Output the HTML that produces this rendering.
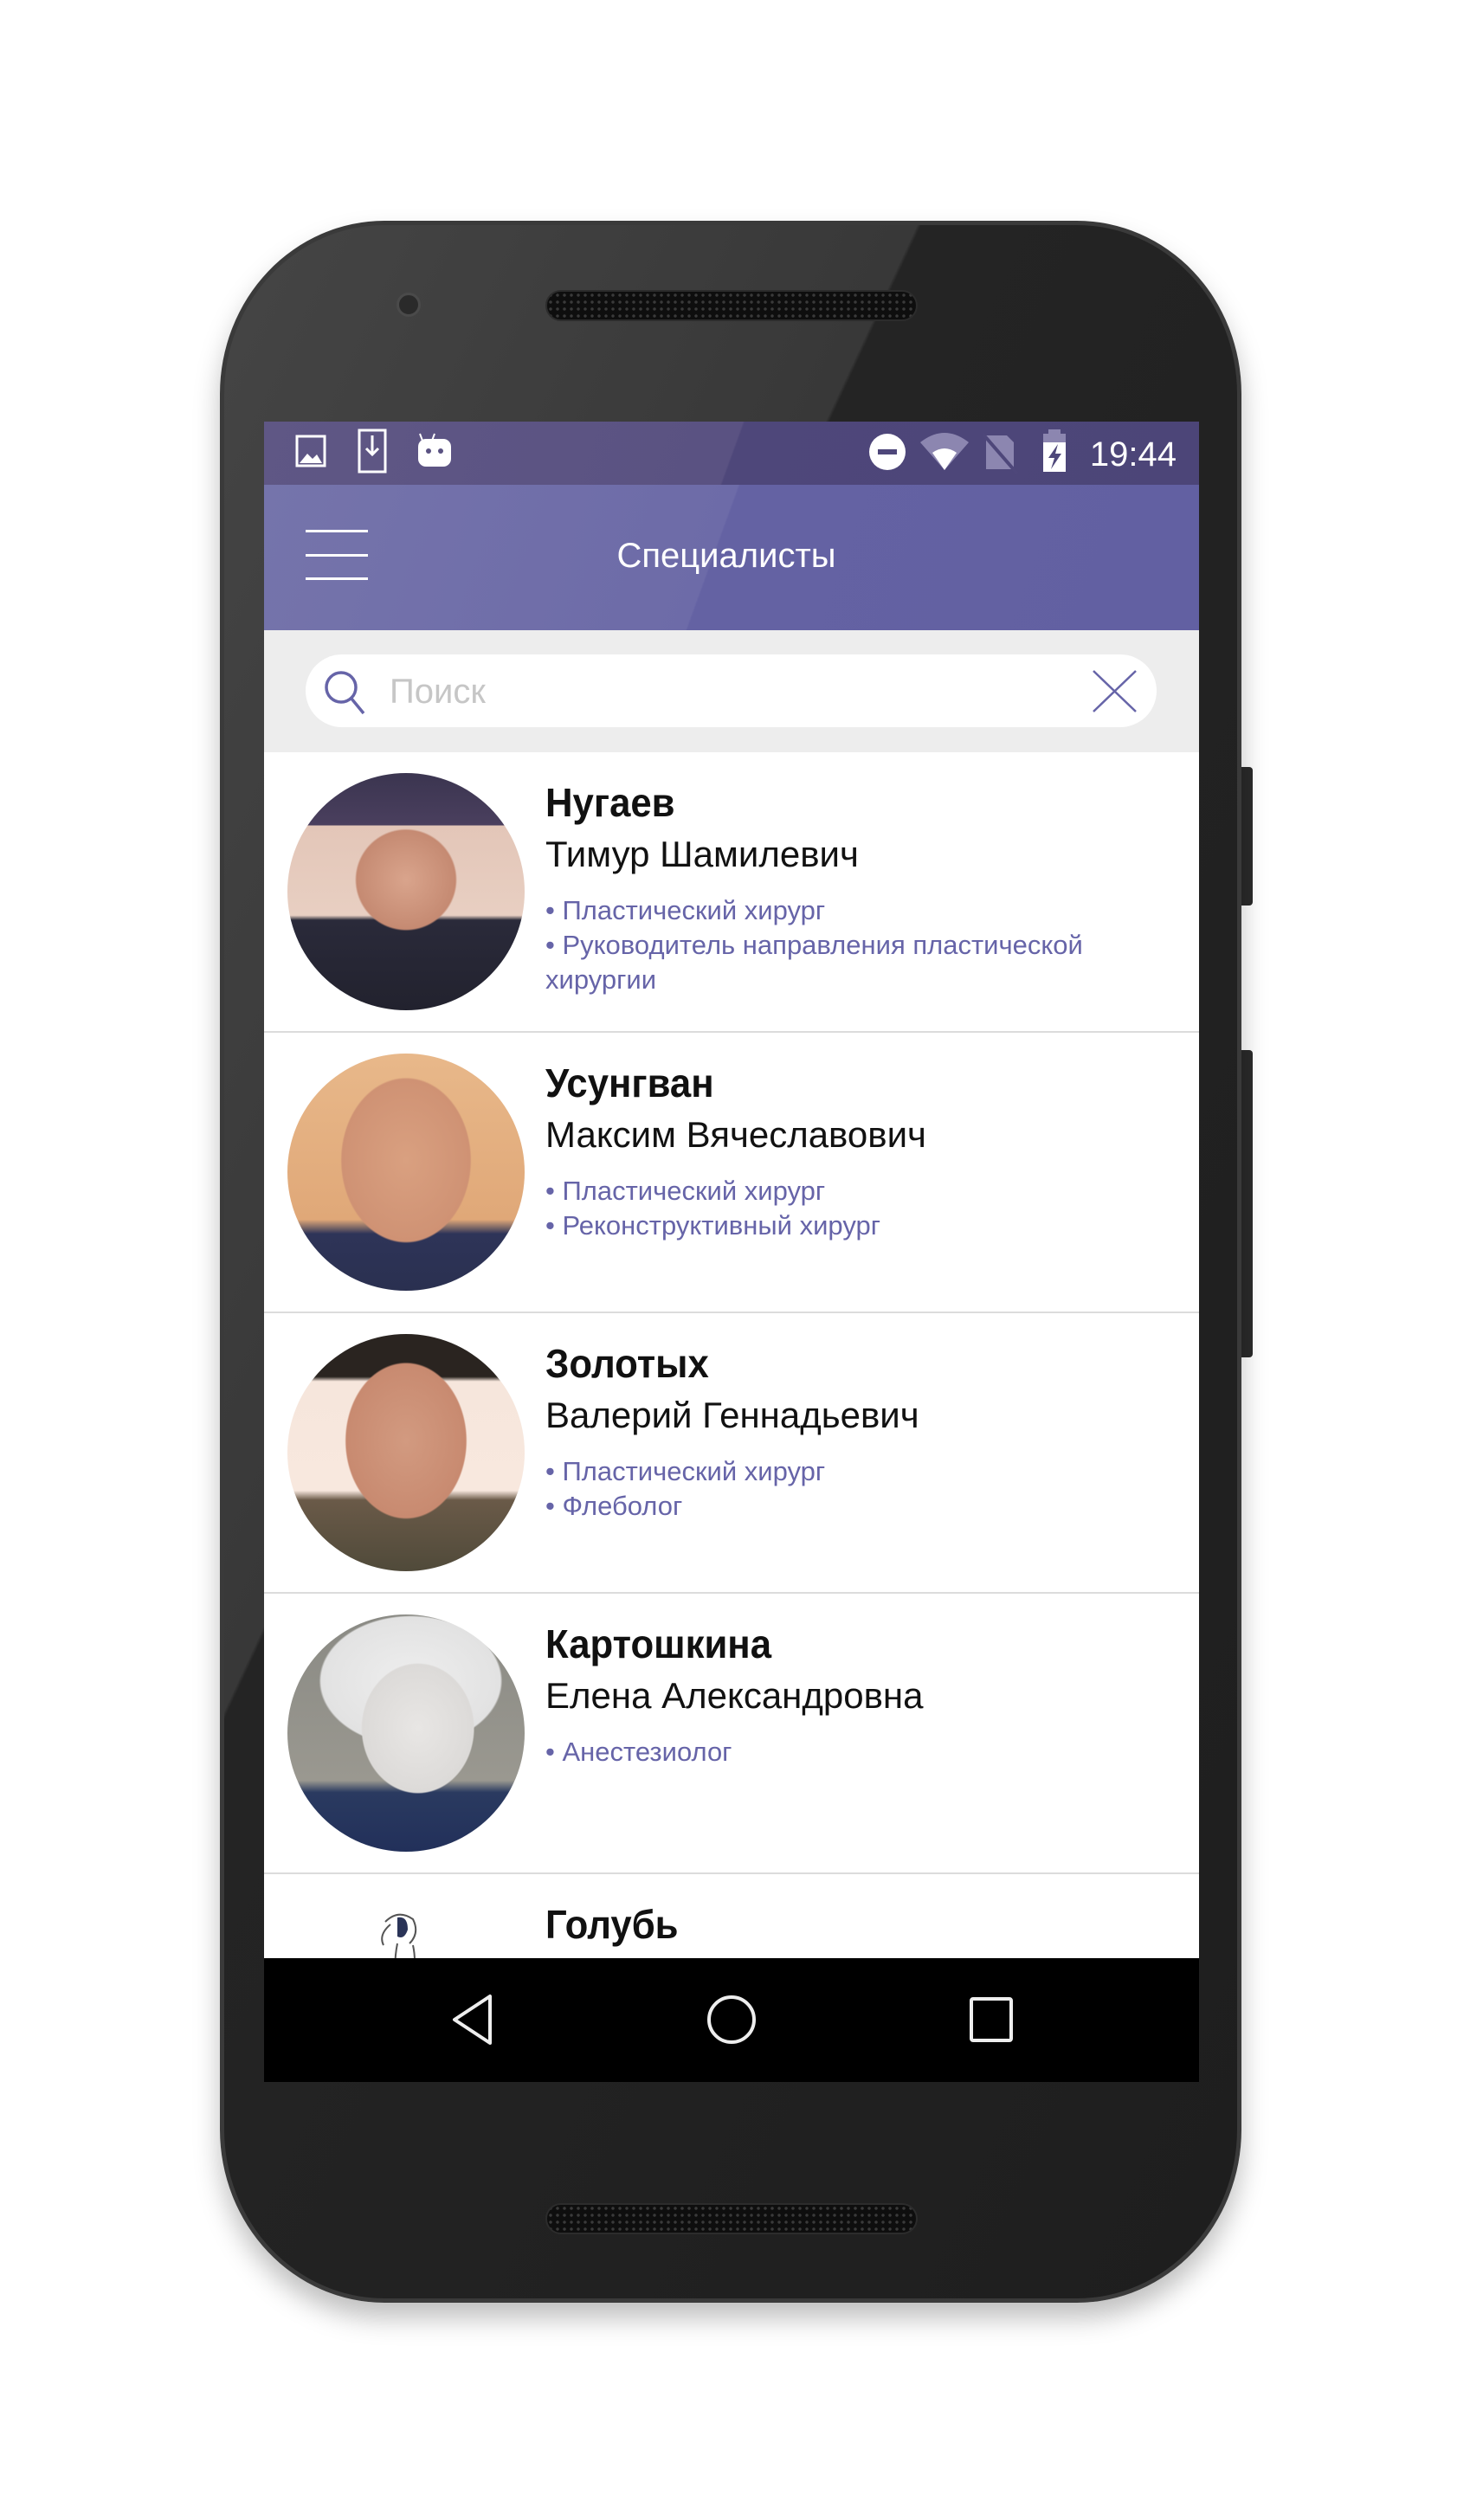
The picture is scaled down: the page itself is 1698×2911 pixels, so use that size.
<!DOCTYPE html>
<html><head><meta charset="utf-8"><style>
*{margin:0;padding:0;box-sizing:border-box}
body{width:1698px;height:2911px;background:#fff;position:relative;overflow:hidden;font-family:"Liberation Sans",sans-serif}
.abs{position:absolute}
.phone{left:254px;top:255px;width:1180px;height:2405px;border-radius:190px/200px;background:linear-gradient(115deg,#454545 0%,#383838 35%,#242424 35.2%,#1e1e1e 100%);border:5px solid #3a3a3a;box-shadow:0 18px 30px rgba(0,0,0,.25)}
.screen{left:305px;top:487px;width:1080px;height:1918px;background:#fff;overflow:hidden}
.row{position:absolute;left:0;width:1080px;height:324px;border-bottom:2px solid #dcdcdc}
.av{position:absolute;left:27px;top:24px;width:274px;height:274px;border-radius:50%;overflow:hidden}
.nm{position:absolute;left:325px;top:35px;font-size:46px;font-weight:bold;line-height:46px;color:#111;transform:scaleX(.95);transform-origin:left}
.fn{position:absolute;left:325px;top:97px;font-size:42px;line-height:42px;color:#111;white-space:nowrap}
.sp{position:absolute;left:325px;top:163px;font-size:31px;line-height:40px;color:#6664a8;white-space:nowrap}
</style></head><body>
<div class="abs" style="left:1433px;top:886px;width:14px;height:160px;background:#2a2a2a;border-radius:0 4px 4px 0"></div>
<div class="abs" style="left:1433px;top:1213px;width:14px;height:355px;background:#2a2a2a;border-radius:0 4px 4px 0"></div>
<div class="abs phone"></div>
<div class="abs" style="left:630px;top:335px;width:430px;height:36px;border-radius:18px;background:#0e0e0e;background-image:radial-gradient(#3a3a3a 1.5px,transparent 2px);background-size:8px 8px;border:2px solid #2c2c2c"></div>
<div class="abs" style="left:630px;top:2545px;width:430px;height:36px;border-radius:18px;background:#0e0e0e;background-image:radial-gradient(#3a3a3a 1.5px,transparent 2px);background-size:8px 8px;border:2px solid #2c2c2c"></div>
<div class="abs" style="left:458px;top:338px;width:28px;height:28px;border-radius:50%;background:#2a2a2a;border:3px solid #4a4a4a"></div>

<div class="abs screen">
  <div class="abs" style="left:0;top:0;width:1080px;height:73px;background:linear-gradient(110deg,#5f5785 0%,#5a5282 50%,#4e477a 50.2%,#4c4578 100%)"></div>
  <svg class="abs" style="left:0;top:0" width="1080" height="73">
    <rect x="38" y="17" width="32" height="34" fill="none" stroke="#fff" stroke-width="3"/>
    <path d="M41 48 L50 37 L56 43 L61 38 L67 48Z" fill="#fff"/>
    <rect x="110" y="10" width="30" height="48" fill="none" stroke="#fff" stroke-width="3"/>
    <path d="M125 16 V38 M118 31 L125 38 L132 31" stroke="#fff" stroke-width="3" fill="none"/>
    <path d="M180 14 L183 22 M197 14 L194 22" stroke="#fff" stroke-width="2"/>
    <rect x="178" y="20" width="38" height="32" rx="9" fill="#fff"/>
    <circle cx="190" cy="34" r="3" fill="#5a5282"/><circle cx="204" cy="34" r="3" fill="#5a5282"/>
    <circle cx="720" cy="35" r="21" fill="#fff"/><rect x="709" y="32" width="22" height="6" fill="#4e477a"/>
    <path d="M758 24 Q786 2 814 24 L786 56Z" fill="#8c86b0"/><path d="M772 36 Q786 26 800 36 L786 56Z" fill="#fff"/>
    <path d="M834 16 L858 16 L866 24 L866 55 L834 55Z" fill="#8c86b0"/><path d="M830 14 L870 60" stroke="#4e477a" stroke-width="4"/>
    <rect x="900" y="14" width="26" height="44" fill="#fff"/><rect x="906" y="9" width="14" height="6" fill="#8c86b0"/>
    <rect x="900" y="14" width="26" height="10" fill="#8c86b0"/>
    <path d="M917 26 L906 42 L913 42 L909 55 L921 37 L914 37Z" fill="#4e477a"/>
    <text x="1054" y="51" text-anchor="end" fill="#fff" font-size="40" font-family="Liberation Sans">19:44</text>
  </svg>
  <div class="abs" style="left:0;top:73px;width:1080px;height:168px;background:linear-gradient(110deg,#7574ab 0%,#6d6ba8 48%,#6462a3 48.2%,#6260a2 100%)"></div>
  <div class="abs" style="left:48px;top:125px;width:72px;height:3px;background:#fff"></div>
  <div class="abs" style="left:48px;top:153px;width:72px;height:3px;background:#fff"></div>
  <div class="abs" style="left:48px;top:180px;width:72px;height:3px;background:#fff"></div>
  <div class="abs" style="left:0;top:133px;width:1080px;text-align:center;color:#fff;font-size:40px;line-height:44px;transform:translateX(-6px)">Специалисты</div>
  <div class="abs" style="left:0;top:241px;width:1080px;height:141px;background:#ededed"></div>
  <div class="abs" style="left:48px;top:269px;width:983px;height:84px;border-radius:42px;background:#fff"></div>
  <svg class="abs" style="left:60px;top:280px" width="70" height="64"><circle cx="29" cy="27" r="17" fill="none" stroke="#6664a8" stroke-width="3.5"/><path d="M41 40 L55 57" stroke="#6664a8" stroke-width="3.5"/></svg>
  <div class="abs" style="left:145px;top:290px;font-size:40px;line-height:44px;color:#c6c6c6">Поиск</div>
  <svg class="abs" style="left:955px;top:285px" width="56" height="52"><path d="M3 3 L52 50 M52 3 L3 50" stroke="#6664a8" stroke-width="2.5"/></svg>

  <div class="row" style="top:382px">
    <div class="av" style="background:radial-gradient(circle at 50% 45%,#d9a48c 0%,#c58a72 28%,transparent 29%),linear-gradient(180deg,#3b3550 0%,#4a3f5e 22%,#e3c6b8 22%,#e8cfc2 60%,#2a2a3a 62%,#22222e 100%)"></div>
    <div class="nm">Нугаев</div>
    <div class="fn">Тимур Шамилевич</div>
    <div class="sp">• Пластический хирург<br>• Руководитель направления пластической<br>хирургии</div>
  </div>
  <div class="row" style="top:706px">
    <div class="av" style="background:radial-gradient(ellipse 30% 38% at 50% 45%,#d9a080 0%,#cf9274 90%,transparent 92%),linear-gradient(180deg,#e8b88a 0%,#e0a878 70%,#2e3458 76%,#2a3050 100%)"></div>
    <div class="nm">Усунгван</div>
    <div class="fn">Максим Вячеславович</div>
    <div class="sp">• Пластический хирург<br>• Реконструктивный хирург</div>
  </div>
  <div class="row" style="top:1030px">
    <div class="av" style="background:radial-gradient(ellipse 28% 36% at 50% 45%,#d29a80 0%,#c88a70 90%,transparent 92%),linear-gradient(180deg,#2a2420 0%,#2a2420 18%,#f6e6dc 20%,#f8e8de 66%,#6a5a48 70%,#504a3a 100%)"></div>
    <div class="nm">Золотых</div>
    <div class="fn">Валерий Геннадьевич</div>
    <div class="sp">• Пластический хирург<br>• Флеболог</div>
  </div>
  <div class="row" style="top:1354px">
    <div class="av" style="background:radial-gradient(ellipse 26% 30% at 55% 48%,#e8e6e4 0%,#dcdad8 90%,transparent 92%),radial-gradient(ellipse 42% 30% at 52% 28%,#eeeeee 0%,#e2e2e2 90%,transparent 92%),linear-gradient(180deg,#8a8a84 0%,#9a9890 70%,#2a3a60 75%,#22305a 100%)"></div>
    <div class="nm">Картошкина</div>
    <div class="fn">Елена Александровна</div>
    <div class="sp">• Анестезиолог</div>
  </div>
  <div class="row" style="top:1678px;border:none">
    <svg class="abs" style="left:110px;top:40px" width="90" height="80"><path d="M30 15 Q45 0 62 12 Q70 28 58 40 M36 18 Q22 30 28 42 M44 40 Q40 60 42 80 M62 42 Q66 60 62 80" stroke="#555" stroke-width="2" fill="none"/><path d="M44 10 Q56 8 56 24 Q52 36 44 32Z" fill="#2a3458"/></svg>
    <div class="nm">Голубь</div>
  </div>

  <div class="abs" style="left:0;top:1775px;width:1080px;height:143px;background:#000"></div>
  <svg class="abs" style="left:0;top:1775px" width="1080" height="143">
    <path d="M261 44 L261 98 L220 71Z" fill="none" stroke="#eee" stroke-width="4" stroke-linejoin="round"/>
    <circle cx="540" cy="71" r="26" fill="none" stroke="#eee" stroke-width="4"/>
    <rect x="817" y="47" width="46" height="48" rx="2" fill="none" stroke="#eee" stroke-width="4"/>
  </svg>
</div>
</body></html>
